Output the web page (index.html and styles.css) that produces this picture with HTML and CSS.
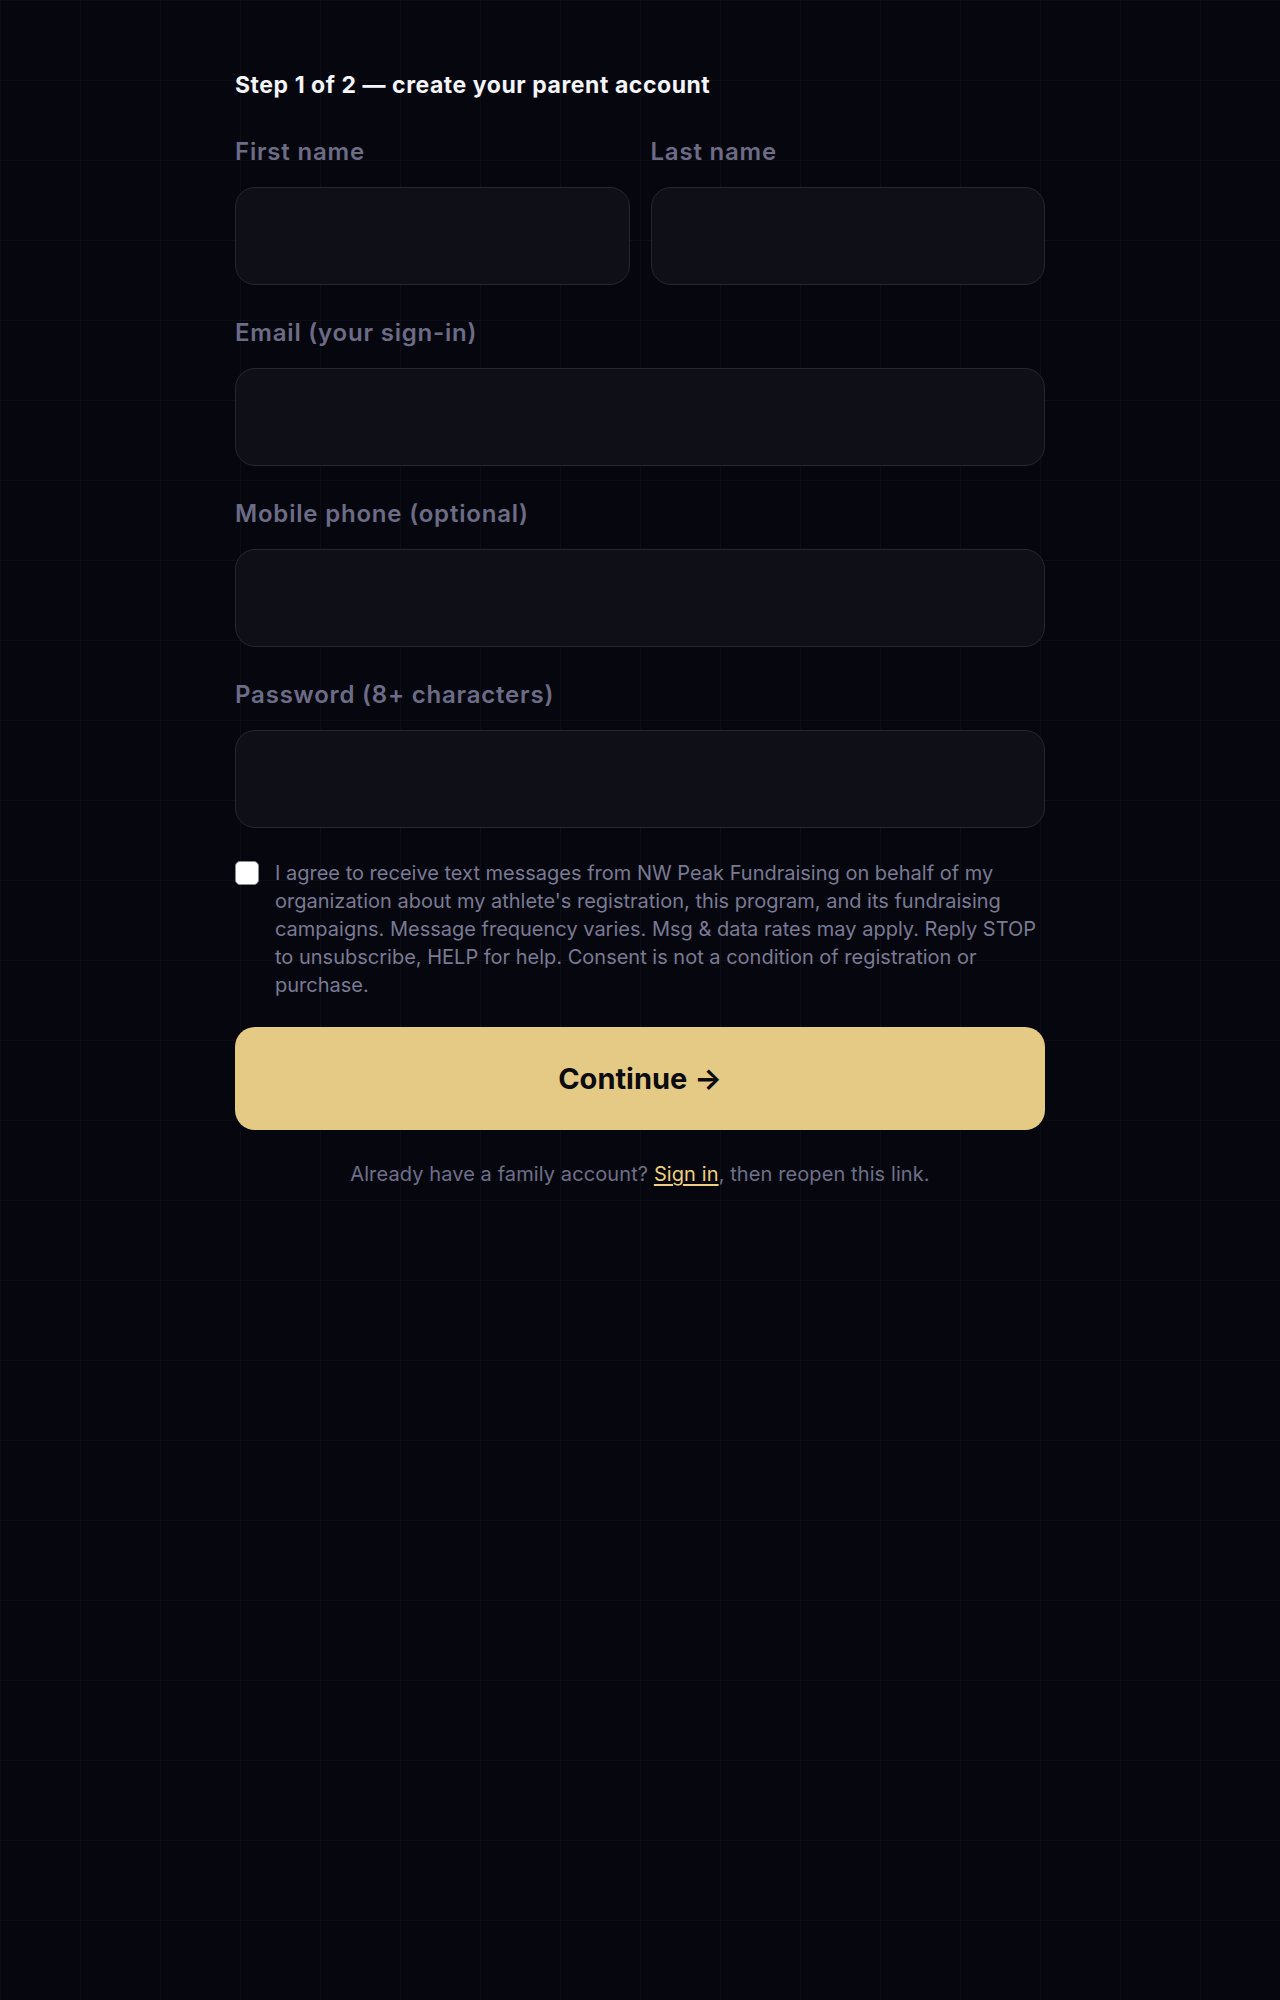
FILE: index.html
```html
<!DOCTYPE html>
<html lang="en">
<head>
<meta charset="utf-8">
<title>Create your parent account</title>
<link rel="stylesheet" href="styles.css">
</head>
<body>
<main class="page">
  <form class="signup">
    <h2 class="step">Step 1 of 2 — create your parent account</h2>
    <div class="row two">
      <label class="field">
        <span class="label">First name</span>
        <input class="input" type="text">
      </label>
      <label class="field">
        <span class="label">Last name</span>
        <input class="input" type="text">
      </label>
    </div>
    <label class="field">
      <span class="label">Email (your sign-in)</span>
      <input class="input" type="email">
    </label>
    <label class="field">
      <span class="label">Mobile phone (optional)</span>
      <input class="input" type="tel">
    </label>
    <label class="field">
      <span class="label">Password (8+ characters)</span>
      <input class="input" type="password">
    </label>
    <label class="consent">
      <span class="box"></span>
      <span class="consent-text">I agree to receive text messages from NW Peak Fundraising on behalf of my organization about my athlete's registration, this program, and its fundraising campaigns. Message frequency varies. Msg &amp; data rates may apply. Reply STOP to unsubscribe, HELP for help. Consent is not a condition of registration or purchase.</span>
    </label>
    <button class="continue" type="button">Continue →</button>
    <p class="footer">Already have a family account? <a href="#" class="signin">Sign in</a>, then reopen this link.</p>
  </form>
</main>
</body>
</html>
```
FILE: styles.css
```css
* { box-sizing: border-box; }
html, body { margin: 0; padding: 0; }
body {
  min-height: 2000px;
  background-color: #06070e;
  background-image:
    linear-gradient(to right, rgba(255,255,255,0.028) 1px, transparent 1px),
    linear-gradient(to bottom, rgba(255,255,255,0.028) 1px, transparent 1px);
  background-size: 80px 80px;
  font-family: Inter, "Liberation Sans", sans-serif;
  color: #7a7a94;
}
.page {
  display: flex;
  justify-content: center;
  padding-top: 71px;
}
.signup {
  width: 810px;
  display: flex;
  flex-direction: column;
}
.step {
  margin: 0;
  font-size: 23px;
  line-height: 28px;
  font-weight: 700;
  color: #f4f5fb;
  letter-spacing: 0.55px;
}
.row.two {
  display: grid;
  grid-template-columns: 1fr 1fr;
  gap: 21px;
  margin-top: 38px;
}
.field {
  display: flex;
  flex-direction: column;
}
.signup > .field { margin-top: 33px; }
.label {
  font-size: 24px;
  line-height: 30px;
  font-weight: 600;
  color: #6d6c87;
  letter-spacing: 0.8px;
}
.input {
  margin-top: 20px;
  height: 98px;
  width: 100%;
  background: #0f1017;
  border: 1.5px solid #262730;
  border-radius: 20px;
  outline: none;
  color: #e9e9f0;
  font: inherit;
  padding: 0 20px;
}
.consent {
  display: flex;
  gap: 16px;
  margin-top: 31px;
  align-items: flex-start;
}
.box {
  flex: none;
  width: 24px;
  height: 24px;
  margin-top: 2px;
  background: #ffffff;
  border: 1.5px solid #8a8a93;
  border-radius: 5px;
}
.consent-text {
  font-size: 20px;
  line-height: 28px;
  letter-spacing: 0;
  color: #7a7a94;
}
.continue {
  margin-top: 28px;
  height: 103px;
  border: none;
  border-radius: 20px;
  background: #e4ca84;
  color: #0b0b10;
  font-family: inherit;
  font-size: 29px;
  font-weight: 700;
  letter-spacing: 0;
  cursor: pointer;
}
.footer {
  margin: 30px 0 0;
  text-align: center;
  font-size: 20px;
  line-height: 28px;
  letter-spacing: 0.1px;
  color: #6f6f8a;
}
.signin {
  color: #efcf7e;
  text-decoration: underline;
  text-underline-offset: 3px;
}
```
